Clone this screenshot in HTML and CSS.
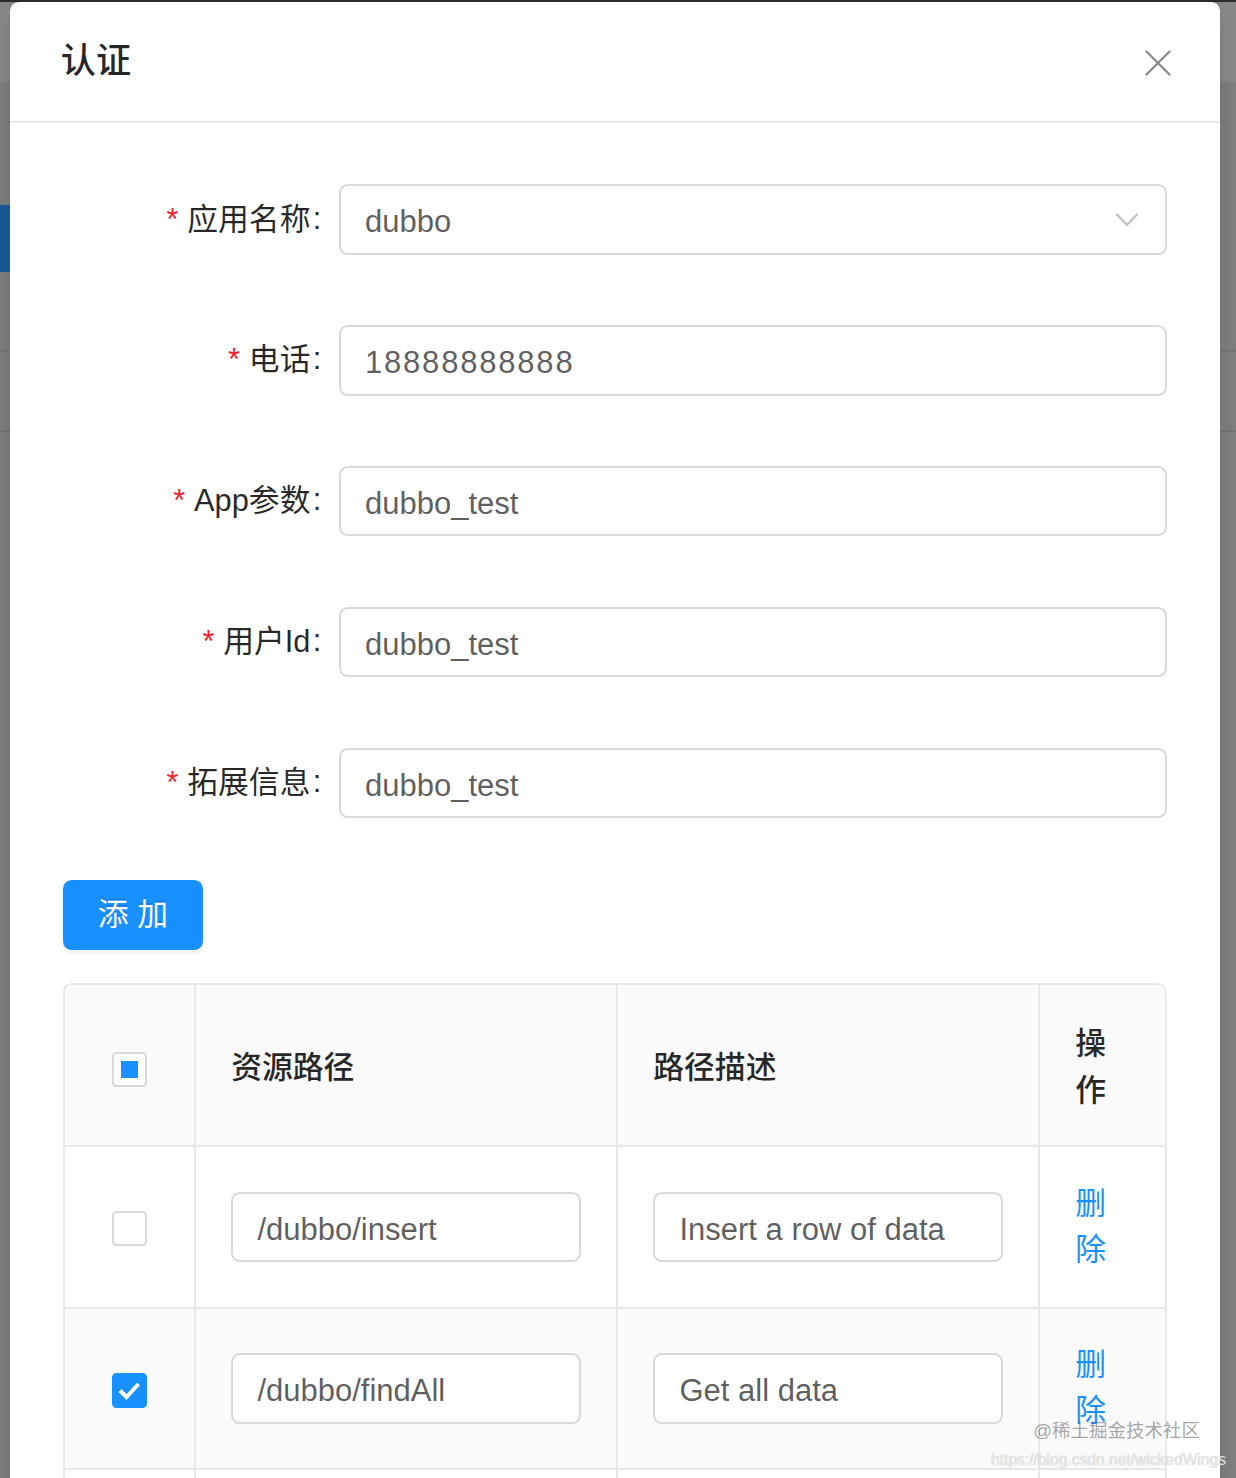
FILE: index.html
```html
<!DOCTYPE html>
<html lang="zh-CN">
<head>
<meta charset="utf-8">
<title>认证</title>
<link rel="stylesheet" href="styles.css">
</head>
<body>
<div class="backdrop">
  <div class="modal">
    <div class="modal-header">
      <div class="modal-title">认证</div>
      <button class="modal-close" type="button" aria-label="Close">
        <svg width="26" height="26" viewBox="0 0 26 26"><path d="M1.5 1.5L24.5 24.5M24.5 1.5L1.5 24.5" stroke="#8c8c8c" stroke-width="2.4" fill="none" stroke-linecap="round"/></svg>
      </button>
    </div>
    <div class="modal-body">
      <form class="form">
        <div class="form-item">
          <div class="form-label"><label class="required">应用名称</label></div>
          <div class="form-control">
            <div class="select">
              <span class="select-value">dubbo</span>
              <svg class="select-arrow" width="24" height="16" viewBox="0 0 24 16"><path d="M1.5 2L12 13L22.5 2" stroke="#bfbfbf" stroke-width="2.2" fill="none"/></svg>
            </div>
          </div>
        </div>
        <div class="form-item">
          <div class="form-label"><label class="required">电话</label></div>
          <div class="form-control"><input class="input input-phone" type="text" value="18888888888"></div>
        </div>
        <div class="form-item">
          <div class="form-label"><label class="required">App参数</label></div>
          <div class="form-control"><input class="input" type="text" value="dubbo_test"></div>
        </div>
        <div class="form-item">
          <div class="form-label"><label class="required">用户Id</label></div>
          <div class="form-control"><input class="input" type="text" value="dubbo_test"></div>
        </div>
        <div class="form-item">
          <div class="form-label"><label class="required">拓展信息</label></div>
          <div class="form-control"><input class="input" type="text" value="dubbo_test"></div>
        </div>
      </form>
      <button class="btn-primary" type="button">添 加</button>
      <table class="table">
        <thead>
          <tr>
            <th class="col-sel"><span class="checkbox indeterminate"><span class="checkbox-inner"></span></span></th>
            <th class="col-path">资源路径</th>
            <th class="col-desc">路径描述</th>
            <th class="col-op">操作</th>
          </tr>
        </thead>
        <tbody>
          <tr>
            <td class="col-sel"><span class="checkbox"></span></td>
            <td><input class="input cell-input" type="text" value="/dubbo/insert"></td>
            <td><input class="input cell-input" type="text" value="Insert a row of data"></td>
            <td><a class="link" href="#">删除</a></td>
          </tr>
          <tr class="selected">
            <td class="col-sel"><span class="checkbox checked"><svg width="31" height="31" viewBox="0 0 31 31"><path d="M6 15.5L12.5 22L24.5 9" stroke="#fff" stroke-width="4" fill="none"/></svg></span></td>
            <td><input class="input cell-input" type="text" value="/dubbo/findAll"></td>
            <td><input class="input cell-input" type="text" value="Get all data"></td>
            <td><a class="link" href="#">删除</a></td>
          </tr>
          <tr class="row-next">
            <td class="col-sel"></td>
            <td></td>
            <td></td>
            <td></td>
          </tr>
        </tbody>
      </table>
    </div>
  </div>
  <div class="watermark">
    <div class="wm-juejin">@稀土掘金技术社区</div>
    <div class="wm-url">https://blog.csdn.net/wickedWings</div>
  </div>
</div>
</body>
</html>
```

FILE: styles.css
```css
html, body {
  margin: 0;
  padding: 0;
}

body {
  font-family: "Liberation Sans", "Noto Sans CJK SC", sans-serif;
  font-size: 30.8px;
  line-height: 1.5;
  color: rgba(0, 0, 0, 0.65);
}

.backdrop {
  position: relative;
  box-sizing: border-box;
  height: 1478px;
  overflow: hidden;
  padding: 2px 0 0 10px;
  background:
    linear-gradient(#1c5b9c, #1c5b9c) 0 205px / 10px 67px no-repeat,
    linear-gradient(to bottom,
      #2b2b2b 0 2px,
      #898989 2px 82px,
      #7e8080 82px 350px,
      #767676 350px 352px,
      #808080 352px 430px,
      #747474 430px 432px,
      #808080 432px 100%);
}

.modal {
  width: 1210px;
  background: #fff;
  border-radius: 8.8px 8.8px 0 0;
  box-shadow: 0 8px 26px rgba(0, 0, 0, 0.15);
  min-height: 1600px;
}

.modal-header {
  display: flex;
  align-items: center;
  justify-content: space-between;
  padding-left: 52.8px;
  border-bottom: 2.2px solid #e8e8e8;
}

.modal-title {
  padding: 35.2px 0;
  margin-left: -2px;
  font-size: 35.2px;
  line-height: 48.4px;
  font-weight: 500;
  color: rgba(0, 0, 0, 0.85);
}

.modal-close {
  width: 123.2px;
  height: 118.8px;
  border: 0;
  padding: 4px 0 0;
  background: none;
  display: flex;
  align-items: center;
  justify-content: center;
}

.modal-body {
  padding: 52.8px;
}

.form-item {
  display: flex;
  align-items: center;
  height: 88px;
  margin-bottom: 52.8px;
}

.form-label {
  width: 276px;
  flex: none;
  text-align: right;
  line-height: 88px;
  white-space: nowrap;
}

.form-label label {
  color: rgba(0, 0, 0, 0.85);
}

.form-label label::after {
  content: ":";
  margin: 0 17.6px 0 2.2px;
  position: relative;
  top: -1px;
}

.required::before {
  content: "*";
  display: inline-block;
  margin-right: 8.8px;
  color: #f5222d;
  font-size: 30.8px;
  line-height: 1;
  font-family: "Liberation Sans", sans-serif;
}

.form-control {
  flex: 1;
  display: flex;
  align-items: center;
}

.input,
.select {
  box-sizing: border-box;
  width: 100%;
  height: 70.4px;
  border: 2.2px solid #d9d9d9;
  border-radius: 8.8px;
  padding: 6px 24.2px 0;
  font: inherit;
  font-size: 31px;
  color: rgba(0, 0, 0, 0.65);
  background: #fff;
  outline: none;
}

.input-phone {
  letter-spacing: 1.8px;
}

.select {
  display: flex;
  align-items: center;
  justify-content: space-between;
  padding-right: 26px;
}

.select-arrow {
  margin-top: -6px;
}

.btn-primary {
  display: block;
  height: 70.4px;
  padding: 0 33px;
  margin: 0 0 33.5px;
  font-family: inherit;
  font-size: 30.8px;
  line-height: 1.5;
  color: #fff;
  background: #1890ff;
  border: 2.2px solid #1890ff;
  border-radius: 8.8px;
  box-shadow: 0 4.4px 0 rgba(0, 0, 0, 0.045);
  text-shadow: 0 -2px 0 rgba(0, 0, 0, 0.12);
}

.table {
  width: 1104px;
  table-layout: fixed;
  border-collapse: separate;
  border-spacing: 0;
  border-top: 2.2px solid #e8e8e8;
  border-left: 2.2px solid #e8e8e8;
  border-radius: 8.8px 8.8px 0 0;
}

.table th,
.table td {
  box-sizing: border-box;
  padding: 33.6px 35.2px;
  border-right: 2.2px solid #e8e8e8;
  border-bottom: 2.2px solid #e8e8e8;
  text-align: left;
  vertical-align: middle;
}

.table th {
  background: #fafafa;
  color: rgba(0, 0, 0, 0.85);
  font-weight: 500;
  padding-top: 36px;
  padding-bottom: 31.2px;
}

.table th:first-child {
  border-top-left-radius: 8.8px;
}

.table th:last-child {
  border-top-right-radius: 8.8px;
}

.table .col-sel {
  width: 131.2px;
  text-align: center;
  padding-left: 0;
  padding-right: 0;
}

.table .col-path,
.table .col-desc {
  width: 422px;
}

.table .col-op {
  width: 126.6px;
}

.table tr.selected td {
  background: #fafafa;
}

.table tr.row-next td {
  height: 160px;
}

.cell-input {
  width: 350px;
  display: block;
}

.link {
  color: #1890ff;
  text-decoration: none;
}

.checkbox {
  box-sizing: border-box;
  display: inline-flex;
  align-items: center;
  justify-content: center;
  width: 35.2px;
  height: 35.2px;
  border: 2.2px solid #d9d9d9;
  border-radius: 4.4px;
  background: #fff;
  vertical-align: middle;
}

.checkbox-inner {
  width: 17.6px;
  height: 17.6px;
  background: #1890ff;
}

.checkbox.checked {
  background: #1890ff;
  border-color: #1890ff;
}

.watermark {
  position: absolute;
  right: 10px;
  bottom: 8px;
  text-align: right;
  line-height: 1.3;
}

.wm-juejin {
  font-size: 18.5px;
  line-height: 1.6;
  color: rgba(90, 90, 90, 0.55);
  padding-right: 26px;
  margin-bottom: 4px;
}

.wm-url {
  font-size: 15.6px;
  line-height: 1.3;
  color: rgba(235, 235, 235, 0.9);
  text-shadow: 0 0 1px rgba(150, 150, 150, 0.6);
}
```
